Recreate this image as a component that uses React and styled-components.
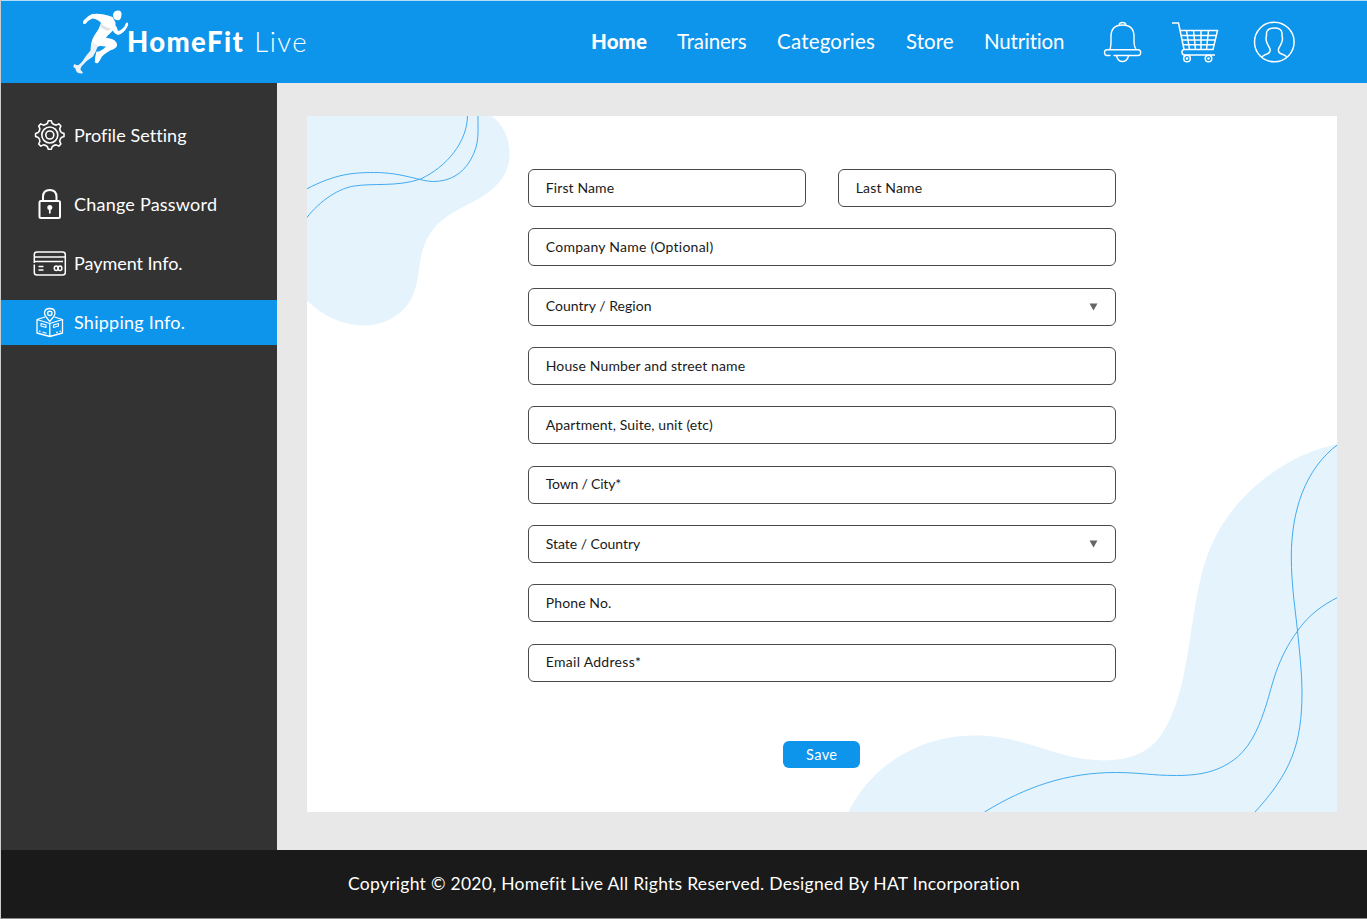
import React from 'react';
import styled, { createGlobalStyle } from 'styled-components';

const blue = '#0d94eb';

const GlobalStyle = createGlobalStyle`
  * { box-sizing: border-box; }
  body { margin: 0; background: #fff; font-family: Lato, "Liberation Sans", sans-serif; }
`;

const Page = styled.div`
  width: 1367px;
  height: 919px;
  display: flex;
  flex-direction: column;
  overflow: hidden;
  border-left: 1px solid #c9cbcc;
  border-bottom: 1px solid #8c8c8c;
`;

const Header = styled.header`
  height: 83px;
  flex: none;
  display: flex;
  align-items: center;
  padding-bottom: 2px;
  background: ${blue};
  border-top: 1px solid #b5dcf7;
  color: #fff;
`;

const Brand = styled.a`
  display: flex;
  flex: none;
  width: 590px;
  height: 72px;
  padding-left: 67px;
  color: #fff;
`;

const BrandName = styled.span`
  display: flex;
  gap: 10px;
  align-items: baseline;
  padding-top: 20px;
  margin-left: -5px;
  font-size: 27.5px;
  line-height: 33px;
  white-space: nowrap;
`;

const BrandBold = styled.b`
  font-weight: 900;
  letter-spacing: ${(p) => p.$track}px;
`;

const BrandLight = styled.span`
  font-weight: 300;
  letter-spacing: ${(p) => p.$track}px;
`;

const Nav = styled.nav`
  display: flex;
  flex: none;
  width: 512px;
`;

const NavLink = styled.a`
  width: ${(p) => p.$width}px;
  flex: none;
  font-size: 20.5px;
  line-height: 26px;
  white-space: nowrap;
  font-weight: ${(p) => (p.$active ? 900 : 400)};
  letter-spacing: ${(p) => p.$track}px;
`;

const Actions = styled.div`
  display: flex;
  align-items: center;
  height: 50px;
  padding-top: 2px;
`;

const ActionButton = styled.button`
  display: flex;
  width: ${(p) => p.$width}px;
  padding: 0;
  border: 0;
  background: none;
`;

const Body = styled.div`
  flex: none;
  height: 767px;
  display: flex;
`;

const Sidebar = styled.aside`
  width: 276px;
  background: #333;
  display: flex;
  flex-direction: column;
  padding-top: 30px;
`;

const SideItem = styled.a`
  display: flex;
  align-items: center;
  height: 45px;
  margin-bottom: ${(p) => p.$gap}px;
  padding: 0 0 2px 29px;
  background: ${(p) => (p.$active ? blue : 'transparent')};
  color: #fff;
  font-size: 18px;
  letter-spacing: ${(p) => p.$track}px;
  white-space: nowrap;
  svg { flex: none; margin-right: 4px; }
`;

const Content = styled.main`
  flex: 1;
  background: #e8e8e8;
  padding: 33px 30px 38px;
`;

const Card = styled.section`
  position: relative;
  height: 696px;
  margin-left: -0.5px;
  background: #fff;
  overflow: hidden;
`;

const Backdrop = styled.svg`
  position: absolute;
  inset: 0;
`;

const Form = styled.form`
  position: relative;
  width: 588px;
  margin: 53px auto 0;
  display: flex;
  flex-direction: column;
  align-items: center;
  gap: 21.35px;
`;

const Row = styled.div`
  width: 100%;
  display: flex;
  gap: 32px;
`;

const Field = styled.label`
  flex: 1;
  height: 38px;
  display: flex;
  align-items: center;
  justify-content: space-between;
  padding: 0 17px 2px;
  border: 1px solid #4a4a4a;
  border-radius: 6px;
  background: #fff;
  color: #1a1a1a;
  font-size: 14px;
  letter-spacing: ${(p) => p.$track}px;
  svg { margin-top: 2px; }
`;

const SaveButton = styled.button`
  width: 77px;
  height: 27px;
  margin-top: 38px;
  padding: 0 0 1px;
  border: 0;
  border-radius: 6px;
  background: ${blue};
  color: #fff;
  font: 400 14.5px Lato, sans-serif;
  letter-spacing: 0.4px;
`;

const Footer = styled.footer`
  flex: 1;
  display: flex;
  justify-content: center;
  align-items: center;
  padding-bottom: 2px;
  background: #1a1a1a;
  color: #fff;
  font-size: 17.5px;
  letter-spacing: 0.275px;
`;

const Runner = () => (
  <svg width="64" height="72" viewBox="68 4.5 64 72" fill="#fff">
    <path d="M92.500 38Q90.500 43 90.500 50Q86 55 83 60Q81 63 78.500 64.500Q76 65 74.500 63.500Q73 65 73.500 66.500Q76 67.500 76 70Q77 73.500 82.500 73Q83.500 71.500 81 70Q80 68 81.500 66Q86 60 93 56Q96 51 97.500 46.500L101 45Z" fill="#edf1f4" />
    <path d="M112.500 16.500Q114.500 20 115.500 22Q116 28 111 32Q107 35 105 39L93 42Q92 38 95 34Q99 29 101 22.500Q98 18.500 92.500 18Q90 19 87.500 21Q86 24 83.500 23.500Q82 21.500 84 19.500Q88 15 92 13.500Q101 12.500 108 15Z" />
    <path d="M101 23Q105 27 111 28L109 30Q103 30 100 25Z" fill="#dce3e8" />
    <path d="M113 14Q114 10 118 10Q122 10 121.500 14.500Q121 19.500 118.500 19.800Q115 20 113.500 17.500Z" />
    <path d="M113 23Q117 25 118 30.500Q121 30 124.500 26Q125 23 127 21.800Q129 23 127.500 26Q123.500 33.500 118 34.500Q113.500 33 112 28Z" />
    <path d="M96 37Q104 36 112 38.500Q117.500 41 117 45Q116.500 48 110 50Q105 53 102 56Q100 60 98 62.500Q95 63.500 94.800 61Q95 56 96.500 51L99 51Q104 48.500 106 46Q98 46 93 42Z" />
  </svg>
);

const Bell = () => (
  <svg width="40" height="42" viewBox="1103 21 40 42" fill="none" stroke="#fff" strokeWidth="1.4" strokeLinecap="round">
    <path d="M1110 49.500Q1111 46 1111 42V36.500Q1111 25 1122.500 25Q1134 25 1134 36.500V42Q1134 46 1136 49.500M1119 25.500Q1119 22.500 1122.500 22.500Q1126 22.500 1126 25.500M1110 55.500H1107Q1104.500 55.500 1104.500 52.500Q1104.500 49.700 1107 49.700H1138Q1140.700 49.700 1140.700 52.500Q1140.700 55.500 1138 55.500H1114M1116.500 56Q1118 61.500 1122.500 61.500Q1127 61.500 1128.500 56" />
  </svg>
);

const Cart = () => (
  <svg width="48" height="42" viewBox="1171 21 48 42" fill="none" stroke="#fff" strokeWidth="1.5">
    <path d="M1172 23H1178.500L1184 49.500H1213L1217.500 30.500H1180M1181 35.500H1216M1182 40H1215M1183 44.700H1214M1186.500 30.500L1189.500 49.500M1193.500 30.500L1195.500 49.500M1201 30.500V49.500M1208.500 30.500L1206.500 49.500M1184 49.500Q1181.500 50 1182 53Q1182.500 55 1185 55H1215" />
    <circle cx="1187" cy="58.500" r="3.300" /><circle cx="1208.500" cy="58.500" r="3.300" />
    <circle cx="1187" cy="58.500" r=".6" /><circle cx="1208.500" cy="58.500" r=".6" />
  </svg>
);

const User = () => (
  <svg width="42" height="42" viewBox="1253 21 42 42" fill="none" stroke="#fff" strokeWidth="1.5">
    <circle cx="1274.300" cy="42" r="19.800" />
    <path d="M1261.500 57Q1264 55 1268 53.500Q1272 51 1268.500 46Q1267.500 44.500 1266.500 41.500Q1265.500 38 1266.500 36V33Q1267 28 1274.300 28Q1281.500 28 1282 33V36Q1283 38 1282 41.500Q1281 44.500 1280 46Q1276.500 51 1280.500 53.500Q1285 55 1287 57" />
  </svg>
);

const gearPath = Array.from({ length: 8 }, (_, i) => {
  const pt = (r, d) => {
    const a = ((i * 45 + d - 90) * Math.PI) / 180;
    return `${(19.8 + r * Math.cos(a)).toFixed(2)} ${(21 + r * Math.sin(a)).toFixed(2)}`;
  };
  return `${i ? 'L' : 'M'}${pt(14.3, -6)}L${pt(14.3, 6)}L${pt(11.8, 12)}Q${pt(10.8, 22.5)} ${pt(11.8, 33)}`;
}).join('') + 'Z';

const Gear = () => (
  <svg width="40" height="42" viewBox="0 0 40 42" fill="none" stroke="#fff" strokeWidth="1.6" strokeLinejoin="round">
    <path d={gearPath} /><circle cx="19.800" cy="21" r="8" /><circle cx="19.800" cy="21" r="4" />
  </svg>
);

const Lock = () => (
  <svg width="40" height="42" viewBox="30 183 40 42" fill="none" stroke="#fff" strokeWidth="2">
    <rect x="39.500" y="201" width="20.500" height="17" rx="1.500" />
    <path d="M43 201V197Q43 190 49.800 190Q56.500 190 56.500 197V201" />
    <circle cx="49.800" cy="207.500" r="2.500" fill="#fff" stroke="none" />
    <path d="M49.800 208V213.500" strokeWidth="1.700" />
  </svg>
);

const CreditCard = () => (
  <svg width="40" height="42" viewBox="30 242 40 42" fill="none" stroke="#fff" strokeWidth="1.500">
    <path d="M34.300 263V254.500Q34.300 252 37 252H62.500Q65.300 252 65.300 254.500V272.500Q65.300 275 62.500 275H37Q34.300 275 34.300 272.500V264.500M34.300 257H65M34.300 261.500H63M38.500 266.500H43.500M38.500 270H43.500" />
    <ellipse cx="56.200" cy="268.300" rx="1.900" ry="2.300" /><ellipse cx="60" cy="268.300" rx="1.900" ry="2.300" />
  </svg>
);

const Parcel = () => (
  <svg width="40" height="42" viewBox="30 301 40 42" fill="none" stroke="#fff" strokeWidth="1.300" strokeLinejoin="round">
    <path d="M45 317L37 319.500V333L49.800 336.500L62.500 333V319.500L54.500 317M37 319.500L49.800 323.500L62.500 319.500M49.800 323.500V336M49.800 321.500Q44.500 315.500 44.500 313.300Q44.500 308.500 49.800 308.500Q55 308.500 55 313.300Q55 315.500 49.800 321.500Z" />
    <path strokeWidth="1.100" d="M41 323.500L46 325V327.500L41 326ZM53.500 325L58.500 323.500V326L53.500 327.500ZM39 331L40.500 331.400M42.500 332L46.500 333.200M56 332.500L58 332M59.500 331.500L61 331" />
    <circle cx="49.800" cy="313.300" r="2.200" />
  </svg>
);

const Caret = () => (
  <svg width="9" height="8" viewBox="0 0 9 8"><path d="M.5 .5H8.500L4.500 7.500Z" fill="#666" /></svg>
);

const navItems = [
  ['Home', 86, 0.1, true],
  ['Trainers', 100, -0.15],
  ['Categories', 129, 0.2],
  ['Store', 78, 0.05],
  ['Nutrition', 119, -0.2],
];

const sideItems = [
  ['Profile Setting', Gear, 24, 0.07],
  ['Change Password', Lock, 14, 0.22],
  ['Payment Info.', CreditCard, 14, -0.04],
  ['Shipping Info.', Parcel, 0, 0.25, true],
];

const fieldRows = [
  [['First Name', 0.12], ['Last Name', 0.15]],
  [['Company Name (Optional)', 0.25]],
  [['Country / Region', 0.03, true]],
  [['House Number and street name', 0.13]],
  [['Apartment, Suite, unit (etc)', 0.11]],
  [['Town / City*', -0.2]],
  [['State / Country', -0.04, true]],
  [['Phone No.', 0.12]],
  [['Email Address*', 0.29]],
];

export default function App() {
  return (
    <Page>
      <GlobalStyle />
      <Header>
        <Brand>
          <Runner />
          <BrandName>
            <BrandBold $track={1.4}>HomeFit</BrandBold>
            <BrandLight $track={1.5}>Live</BrandLight>
          </BrandName>
        </Brand>
        <Nav>
          {navItems.map(([label, width, track, active]) => (
            <NavLink key={label} $width={width} $track={track} $active={active}>{label}</NavLink>
          ))}
        </Nav>
        <Actions>
          <ActionButton $width={68} aria-label="Notifications"><Bell /></ActionButton>
          <ActionButton $width={82} aria-label="Cart"><Cart /></ActionButton>
          <ActionButton $width={42} aria-label="Account"><User /></ActionButton>
        </Actions>
      </Header>
      <Body>
        <Sidebar>
          {sideItems.map(([label, Icon, gap, track, active]) => (
            <SideItem key={label} $gap={gap} $track={track} $active={active}><Icon />{label}</SideItem>
          ))}
        </Sidebar>
        <Content>
          <Card>
            <Backdrop width="1031" height="696" viewBox="306.5 116 1031 696" fill="none">
              <path fill="#e5f3fd" d="M306 116H491C503 125 509 138 509 155C509 172 499 185 484 195C462 209 437 216 426 240C416 260 421 283 409 302C385 337 335 330 306 300Z" />
              <path fill="#e5f3fd" d="M1338 444C1290 453 1230 492 1207 555C1187 610 1192 690 1160 736C1142 761 1108 765 1068 756C1036 748 1010 735 973 735.500C916 736 869 768 848 812H1338Z" />
              <path stroke="#42abf0" d="M306 189C335 174 352 172.500 374 172.500C402 172.500 420 181.500 433 181.500C449 181.500 462 174 470 160C480 143 477 130 477.500 115M306 218C320 200 339 188 354 186C372 183 397 187 420 179C446 167 467 142 467 115" />
              <path stroke="#42abf0" d="M984 812C1025 787 1066 772.500 1115 772.500C1140 772.500 1150 775.500 1176 775.500C1206 775.500 1222 769 1237 757C1252 744 1260 723 1266 704C1272 685 1276 660 1297 631C1308 615 1322 605 1338 597M1338 444C1304 469 1290.800 512 1290.800 557C1290.800 585 1295 611 1297 631C1299 652 1301.500 672 1301.500 692C1301.500 745 1290 773 1254.500 812" />
            </Backdrop>
            <Form>
              {fieldRows.map((row) => (
                <Row key={row[0][0]}>
                  {row.map(([label, track, select]) => (
                    <Field key={label} $track={track}>{label}{select && <Caret />}</Field>
                  ))}
                </Row>
              ))}
              <SaveButton type="button">Save</SaveButton>
            </Form>
          </Card>
        </Content>
      </Body>
      <Footer>Copyright © 2020, Homefit Live All Rights Reserved. Designed By HAT Incorporation</Footer>
    </Page>
  );
}
